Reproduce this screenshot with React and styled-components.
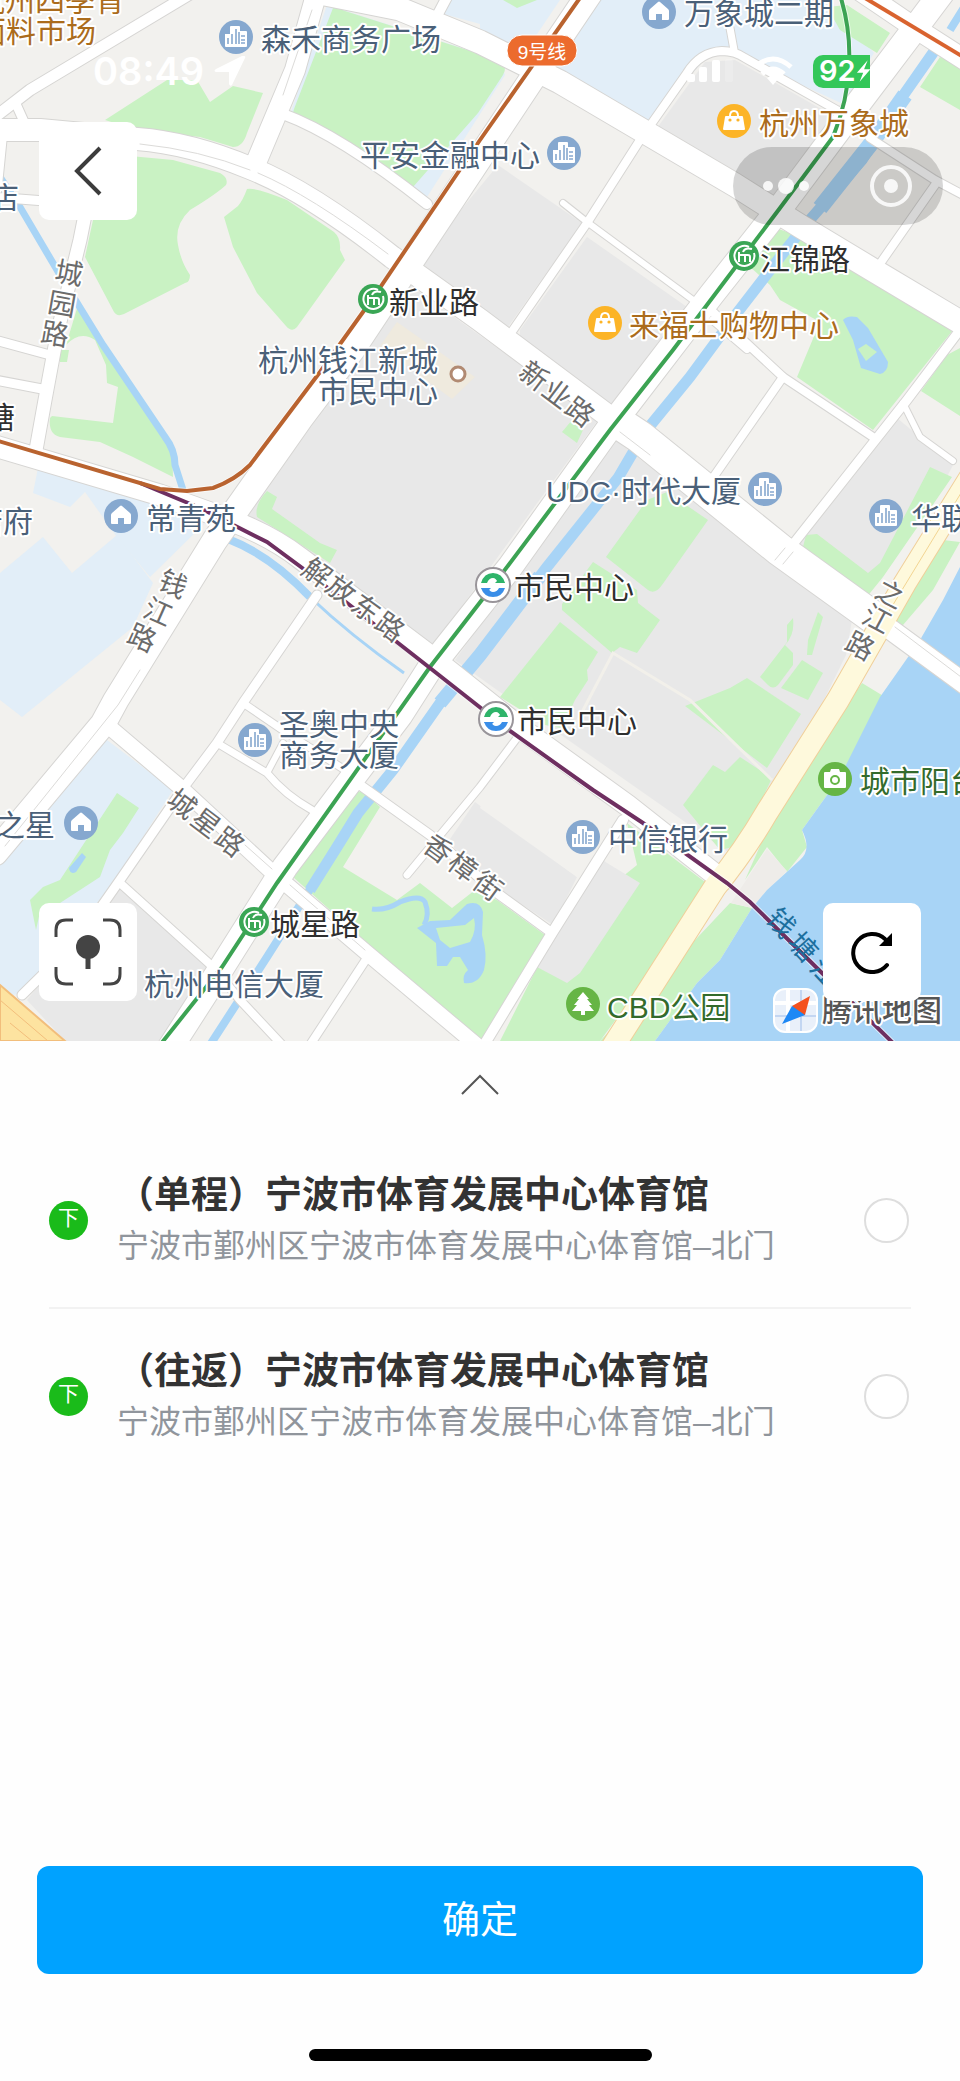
import { useState } from 'react';
import styled, { createGlobalStyle } from 'styled-components';

const sans = `"Liberation Sans", "Noto Sans CJK SC", sans-serif`;

const GlobalStyle = createGlobalStyle`
    * {
        box-sizing: border-box;
    }
    body {
        margin: 0;
        background-color: #fefefe;
        font-family: ${sans};
    }
`;

const Page = styled.div`
    display: flex;
    flex-direction: column;
    min-height: 100vh;
`;

/* map and its controls share one grid cell */
const MapArea = styled.section`
    display: grid;
    overflow: hidden;
    & > * {
        grid-area: 1 / 1;
    }
`;

const MapSvg = styled.svg`
    display: block;
    width: 100%;
    height: auto;
    background-color: #f2f1ee;
    text {
        font-family: ${sans};
    }
`;

const Overlay = styled.div`
    display: flex;
    flex-direction: column;
    padding-bottom: 40px;
`;

const StatusBar = styled.header`
    display: flex;
    align-items: center;
    height: 122px;
    padding: 20px 90px 0 93px;
    color: #fff;
`;

const Time = styled.time`
    font: 600 38px/44px Inter, sans-serif;
    margin-right: 10px;
`;

const StatusIcons = styled.div`
    display: flex;
    align-items: center;
    gap: 20px;
    margin-left: auto;
`;

const Battery = styled.div`
    display: flex;
    align-items: center;
    width: 57px;
    height: 33px;
    padding-left: 6px;
    border-radius: 10px 0 0 10px;
    background-color: #34c759;
    font: 600 29px/32px Inter, sans-serif;
    overflow: hidden;
`;

const NavRow = styled.div`
    display: flex;
    justify-content: space-between;
    padding: 0 17px 0 39px;
`;

const ToolRow = styled.div`
    display: flex;
    justify-content: space-between;
    margin-top: auto;
    padding: 0 39px;
`;

const SquareBtn = styled.button`
    display: flex;
    align-items: center;
    justify-content: center;
    width: 98px;
    height: 98px;
    padding: 0;
    border: none;
    border-radius: 10px;
    background-color: #fff;
    cursor: pointer;
`;

const Capsule = styled.div`
    display: flex;
    width: 210px;
    height: 78px;
    margin-top: 25px;
    border-radius: 39px;
    background-color: rgba(0, 0, 0, 0.16);
`;

const CapsuleBtn = styled.button`
    display: flex;
    flex: 1;
    align-items: center;
    justify-content: center;
    padding: 0;
    border: none;
    background: none;
    cursor: pointer;
`;

const Sheet = styled.main`
    display: flex;
    flex-direction: column;
    flex: 1;
`;

const FoldBtn = styled.button`
    display: flex;
    justify-content: center;
    height: 92px;
    padding: 32px 0 0;
    border: none;
    background: none;
    cursor: pointer;
`;

const StopList = styled.ul`
    list-style: none;
    margin: 0;
    padding: 0 49px;
`;

const StopItem = styled.li`
    border-bottom: 2px solid #f2f2f2;
    &:last-child {
        border-bottom-color: transparent;
    }
`;

const StopLabel = styled.label`
    display: flex;
    align-items: center;
    height: 174px;
    padding-right: 2px;
    cursor: pointer;
`;

const Badge = styled.span`
    flex: none;
    width: 39px;
    height: 39px;
    margin-right: 29px;
    border-radius: 50%;
    background-color: #1abb1a;
    color: #fff;
    font-size: 21px;
    line-height: 34px;
    text-align: center;
`;

const StopText = styled.span`
    display: flex;
    flex-direction: column;
    flex: 1;
`;

const StopName = styled.span`
    color: #333;
    font-size: 37px;
    font-weight: 700;
    line-height: 52px;
`;

const StopAddress = styled.span`
    color: #90959c;
    font-size: 32px;
    line-height: 48px;
`;

const Radio = styled.input`
    appearance: none;
    flex: none;
    width: 45px;
    height: 45px;
    margin: 0;
    border: 2px solid #dedede;
    border-radius: 50%;
    background-color: #fff;
    &:checked {
        border: 12px solid #00a2ff;
    }
`;

const Footer = styled.footer`
    display: flex;
    flex-direction: column;
    align-items: center;
    padding: 0 37px 20px;
`;

const ConfirmBtn = styled.button`
    width: 100%;
    height: 108px;
    margin-bottom: 75px;
    padding: 0 0 8px;
    border: none;
    border-radius: 12px;
    background-color: #00a2ff;
    color: #fff;
    font-family: ${sans};
    font-size: 38px;
    cursor: pointer;
`;

const HomeBar = styled.div`
    width: 343px;
    height: 12px;
    border-radius: 6px;
    background-color: #000;
`;

const GREEN = '#c9f2c3';
const GRAY = '#e8e8e8';
const PALE = '#e2eef8';
const WATER = '#a8d4f6';

const paleAreas = [
    'M0 573L43 537L72 573L117 535L153 583L133 627L43 700L22 717L0 700Z',
    'M38 468L180 510L204 524L150 577L117 537L85 492L70 507L33 493Z',
    'M103 737L173 790L120 873L97 903L33 990L13 995L0 985V863Z',
    'M480 0H560L523 55L480 30ZM594 0H830L874 53L843 104L733 53L707 57L647 123L550 70Z',
    'M450 0H480V24L440 13ZM327 5L500 60L505 75L427 197L291 112Z',
];

const grayAreas = [
    'M498 165L582 223L508 327L418 262Z',
    'M404 281L475 332L598 420L432 647L395 622L247 515Z',
    'M587 237L687 307L688 320L610 408L520 340V330Z',
    'M615 440L852 620L846 655L750 850L735 857L497 690L455 660Z',
    'M657 128L705 62L735 60L837 118L772 200Z',
    'M897 418L953 465L930 510L870 580L795 550Z',
    'M475 802L577 877L553 925L500 890L448 842Z',
    'M118 887L210 970L160 1041H65L27 1000Z',
];

const greenAreas = [
    'M105 120L167 80L197 80L210 102L233 86L263 93L247 133Q243 147 233 147L200 137L137 130Z',
    'M333 8Q340 8 345 11L480 54L500 62Q508 67 503 75L478 113L413 187L380 167L295 118Q292 114 294 109Z',
    'M130 156L173 160L220 173Q229 178 226 185Q215 195 190 210Q174 225 178 245Q181 262 190 275Q190 282 185 283L124 314Q117 317 114 312L85 257L93 220Z',
    'M247 189Q255 187 287 200L334 232Q341 238 340 250L345 260L297 327Q292 333 286 326L257 293L233 247L224 217L238 206Q243 200 247 189Z',
    'M78 305L107 350L172 445L173 477L133 457L100 442L60 437Q48 434 50 418L52 416L113 423L118 387L107 383L106 365L95 340Q80 330 66 345Z',
    'M267 491L277 497L272 509L320 543L337 550L330 563L257 517Q254 505 267 491Z',
    'M647 500L667 492L708 520L662 585Q655 595 648 590L606 557Z',
    'M593 562L637 590L638 603L660 620L637 653L620 647L612 653L562 610V604Z',
    'M560 622L598 652L587 670L588 680L575 700L562 728L545 725L500 697Z',
    'M793 618Q795 635 785 645L793 653V665L778 685Q773 690 768 685L760 677L787 642L787 625Z',
    'M818 612L823 617L812 655L807 655L808 640Z',
    'M802 660L823 673L808 700L781 688Z',
    'M685 706L730 688L747 678L801 714L767 768Z',
    'M713 765L725 772L740 757L772 778L763 797L733 847L720 850L683 805Z',
    'M930 467L952 477L883 577L866 598L803 547L806 535L817 534L868 573L880 563Z',
    'M943 540L960 542L933 590L897 632L885 620Z',
    'M850 700L862 683L885 697L840 777L802 830L807 847L787 872L767 847L745 880L767 830Z',
    'M627 823L713 888L600 1041H500L556 930L637 865Z',
    'M730 903L752 908L720 960L697 983L655 1041H600Z',
    'M350 793L363 791L380 807L343 867L397 900L420 883L452 908L475 890L497 900L545 935L487 1041H477L293 877Z',
    'M117 793L139 808L123 833L110 850L100 877L60 903L40 912L36 930L30 900L43 887L60 880Z',
    'M773 227L790 233L953 330L873 430L797 377L820 322L780 300L770 285L748 265Z',
    'M827 7L847 5L890 33L877 53L840 30ZM940 57L960 66V110L920 87Z',
    'M947 355L960 348V416L921 391ZM572 420L583 430L577 443L562 432Z',
    'M503 0H537L517 8ZM60 350H69L67 362H60Z',
];

// [path, width]; casing is drawn 2px wider below every fill
const roads = [
    ['M200 -12L30 90L-5 117', 11],
    ['M16 104L25 124', 9],
    ['M-5 130L40 130L137 139Q190 143 250 168Q310 192 392 257L480 320L607 415', 22],
    ['M316 -5L295 70L255 165', 20],
    ['M283 114Q340 135 427 204', 10],
    ['M325 -6L400 9L480 42L560 82L735 185L800 226L873 270L965 325', 23],
    ['M447 -3L438 14', 10],
    ['M592 -10L530 82L447 207L352 350L300 419L215 540L116 700L103 724L-5 853', 25],
    ['M862 -8L915 28L965 60', 20],
    ['M955 -25L910 35L857 105L780 208L712 294L610 427L510 567L430 668L400 715L285 867L222 967L170 1048', 25],
    ['M-5 446L160 495L227 519Q270 535 300 558L430 656L523 730L627 805L722 880', 21],
    ['M100 140L80 240L58 330L45 400L36 450', 13],
    ['M2 140L-3 190M-5 197L45 201M-5 340L50 355M-5 380L42 389', 9],
    ['M317 595L245 700L217 743L187 783L120 880L78 940L22 995', 9],
    ['M107 725L180 787L273 873L367 953L480 1048', 15],
    ['M243 703L290 735L345 770', 7],
    ['M217 743L267 773Q285 795 312 810', 7],
    ['M283 743L267 773', 6],
    ['M120 883L213 967L240 1000L285 1048', 8],
    ['M367 958L308 1048', 8],
    ['M360 785L430 835L497 893L552 933', 9],
    ['M407 875L480 787L517 738', 7],
    ['M623 820L552 933L484 1045', 10],
    ['M513 330L587 223L640 140L687 73Q700 52 722 51Q735 51 745 58L842 113', 8],
    ['M730 28L734 50', 7],
    ['M563 203L587 222L693 300', 6],
    ['M870 138L935 180L965 196M937 182L877 268', 8],
    ['M713 312L783 377L873 437M747 349L713 320', 8],
    ['M783 377L710 482', 8],
    ['M975 310L907 400L790 548', 9],
    ['M903 403L920 437L953 461', 6],
];

const wideRoad = 'M607 415L640 437L697 483L780 550L873 617';
const riverRoad = 'M868 613L965 684';
const coastRoad = 'M975 470L905 583L838 700L767 812Q745 850 715 887L612 1048';
const canalWide = 'M935 50L900 100L862 160L808 222L784 252L737 313L690 377L645 432L618 478L547 567L480 655L440 703L393 770L358 813L337 847L310 890';
const canalThin = 'M312 886L267 957L208 1048M975 -10L950 30';
const qiantang = 'M960 567L943 600L920 640L880 697L840 777L802 830Q812 850 800 860L767 890L752 908L720 960L697 983L655 1041H960Z';

const metroLines = [
    ['M840 -5Q851 30 849 65Q848 100 833 137L780 208L673 350L610 430L495 583L430 667L277 883L222 967L160 1045', '#3ca353'],
    ['M140 483L200 508L267 542L305 570L430 668L510 731L593 790L643 823L727 883L750 902L822 973L895 1045', '#6e2f60'],
    ['M-5 440L160 489L187 491L213 488Q235 480 250 465L320 372L373 298L480 140L582 -5', '#b9632f'],
    ['M860 -5L965 58', '#d9632f'],
];

const places = [
    { kind: 'building', cx: 236, cy: 37, x: 261, y: 50, lines: ['森禾商务广场'] },
    { kind: 'building', cx: 564, cy: 153, x: 360, y: 166, lines: ['平安金融中心'] },
    { kind: 'home', cx: 659, cy: 12, x: 684, y: 24, lines: ['万象城二期'] },
    { kind: 'bag', cx: 734, cy: 121, x: 759, y: 134, lines: ['杭州万象城'] },
    { kind: 'bag', cx: 605, cy: 323, x: 629, y: 336, lines: ['来福士购物中心'] },
    { kind: 'dot', cx: 458, cy: 374, x: 438, y: 371, lines: ['杭州钱江新城', '市民中心'], end: true },
    { kind: 'building', cx: 765, cy: 489, x: 546, y: 502, lines: ['UDC·时代大厦'] },
    { kind: 'building', cx: 886, cy: 516, x: 911, y: 529, lines: ['华联'] },
    { kind: 'home', cx: 121, cy: 516, x: 146, y: 529, lines: ['常青苑'] },
    { kind: 'building', cx: 255, cy: 740, x: 279, y: 735, lines: ['圣奥中央', '商务大厦'] },
    { kind: 'home', cx: 81, cy: 823, x: -5, y: 836, lines: ['之星'] },
    { kind: 'building', cx: 583, cy: 837, x: 608, y: 850, lines: ['中信银行'] },
    { kind: 'tree', cx: 583, cy: 1004, x: 607, y: 1018, lines: ['CBD公园'] },
    { kind: 'camera', cx: 835, cy: 779, x: 860, y: 792, lines: ['城市阳台'] },
    { kind: 'none', x: 144, y: 995, lines: ['杭州电信大厦'] },
    { kind: 'none', x: 19, y: 208, lines: ['酒店'], end: true },
    { kind: 'none', x: 33, y: 532, lines: ['唐府'], end: true },
    { kind: 'shop', x: 125, y: 11, lines: ['杭州四季青'], end: true },
    { kind: 'shop', x: 96, y: 42, lines: ['面料市场'], end: true },
];

const placeColor = {
    bag: '#ab6c1c',
    shop: '#ab6c1c',
    tree: '#336b2c',
    camera: '#336b2c',
};

const stations = [
    { name: '新业路', cx: 373, cy: 299, y: 313 },
    { name: '江锦路', cx: 744, cy: 256, y: 270 },
    { name: '城星路', cx: 254, cy: 922, y: 935 },
    { name: '市民中心', cx: 493, cy: 585, y: 598, transfer: true },
    { name: '市民中心', cx: 496, cy: 719, y: 732, transfer: true },
];

// every glyph keeps its own anchor so that the name follows the street
const streets = [
    { rotate: 10, chars: [['城', 69, 273], ['园', 62, 304], ['路', 55, 334]] },
    { rotate: 24, chars: [['钱', 173, 584], ['江', 158, 612], ['路', 142, 638]] },
    { rotate: 28, chars: [['之', 890, 594], ['江', 877, 619], ['路', 860, 646]] },
    { rotate: 36, chars: [['解', 317, 573], ['放', 341, 590], ['东', 366, 609], ['路', 390, 627]] },
    { rotate: 37, chars: [['新', 534, 376], ['业', 557, 394], ['路', 580, 412]] },
    { rotate: 37, chars: [['城', 182, 804], ['星', 206, 823], ['路', 230, 842]] },
    { rotate: 36, chars: [['香', 438, 849], ['樟', 463, 867], ['街', 488, 886]] },
    { rotate: 47, color: '#1c6f9e', halo: 'none', chars: [['钱', 781, 923], ['塘', 803, 947], ['江', 825, 972]] },
];

function PlaceIcon({ kind }) {
    if (kind === 'building') {
        return (
            <g>
                <circle r="17" fill="#86a8cf" />
                <path d="M-11 9V-3H-6V-10Q-6-11-5-11H3Q4-11 4-10V-6H10Q11-6 11-5V9Q11 10 10 10H-10Q-11 10-11 9Z" fill="#fff" />
                <path d="M-8 1V7M-4-3V7M0-8V7M3-5V7M5 -1H9M5 3H9M5 6H9" stroke="#86a8cf" strokeWidth="1.6" />
            </g>
        );
    }
    if (kind === 'home') {
        return (
            <g>
                <circle r="17" fill="#86a8cf" />
                <path d="M-1-10Q0-11 1-10L9-3Q10-2 10-1V7Q10 8 9 8H3V2H-3V8H-9Q-10 8-10 7V-1Q-10-2-9-3Z" fill="#fff" />
            </g>
        );
    }
    if (kind === 'bag') {
        return (
            <g>
                <circle r="17" fill="#fcb427" />
                <path d="M-4-5Q-4-10 0-10Q4-10 4-5" fill="none" stroke="#fff" strokeWidth="2" />
                <path d="M-8-5H8Q9-5 9-4L11 8Q11 9 10 9H-10Q-11 9-11 8L-9-4Q-9-5-8-5Z" fill="#fff" />
                <circle cx="-4" cy="-1" r="1.6" fill="#fcb427" />
                <circle cx="4" cy="-1" r="1.6" fill="#fcb427" />
            </g>
        );
    }
    if (kind === 'tree') {
        return (
            <g>
                <circle r="17" fill="#66b545" />
                <path d="M0-12L6-5H4L9 1H6L11 7H2V11H-2V7H-11L-6 1H-9L-4-5H-6Z" fill="#fff" />
            </g>
        );
    }
    if (kind === 'camera') {
        return (
            <g>
                <circle r="17" fill="#66b545" />
                <path d="M-10-7H-5L-4-10H4L5-7H10Q11-7 11-6V8Q11 9 10 9H-10Q-11 9-11 8V-6Q-11-7-10-7Z" fill="#fff" />
                <circle cy="1" r="4" fill="none" stroke="#66b545" strokeWidth="2" />
            </g>
        );
    }
    if (kind === 'dot') {
        return <circle r="7" fill="#fff" stroke="#b18a72" strokeWidth="3" />;
    }
    return null;
}

function StationIcon({ transfer }) {
    if (transfer) {
        return (
            <g fill="none">
                <circle r="17" fill="#fff" stroke="#99959a" strokeWidth="2" />
                <path d="M-12-2Q-9-12 0-12Q9-12 12-2H5Q3-7 0-7Q-4-7-6-2Z" fill="#2fb46a" />
                <path d="M2-2H12L7-7Z" fill="#2fb46a" />
                <path d="M12 3Q9 12 0 12Q-9 12-12 3H-5Q-3 7 0 7Q4 7 6 3Z" fill="#3a8ee8" />
                <path d="M-2 3H-12L-7 8Z" fill="#3a8ee8" />
            </g>
        );
    }
    return (
        <g fill="none" stroke="#fff">
            <circle r="15" fill="#3aa655" stroke="none" />
            <path d="M5-9A10 10 0 1 0 10-3" strokeWidth="2" />
            <path d="M-5 6V-4M-5-1H4Q6-1 6 1V6M1-1V6" strokeWidth="2" />
            <path d="M-1-4Q1-9 8-7" strokeWidth="2" />
        </g>
    );
}

function CityMap() {
    const label = { fontSize: 30, stroke: '#fff', strokeWidth: 4, strokeLinejoin: 'round', paintOrder: 'stroke' };

    return (
        <MapSvg viewBox="0 0 960 1041" role="img" aria-label="地图">
            {paleAreas.map((d) => <path key={d} d={d} fill={PALE} />)}
            {grayAreas.map((d) => <path key={d} d={d} fill={GRAY} />)}
            <path d="M397 322L475 377L452 399L380 346Z" fill="#efeade" />
            {greenAreas.map((d) => <path key={d} d={d} fill={GREEN} />)}
            <path d="M607 863L640 883L580 973L567 983L537 967L600 858Z" fill={GRAY} />
            <path d="M507 732L617 808L577 877L480 808Z" fill="#f2f1ee" />
            <path d="M767 849L787 871L767 890L752 908L731 903Z" fill="#eeece9" />
            <path d="M570 735L613 653L690 700L772 780" fill="none" stroke="#f2f0ea" strokeWidth="3" />
            <path d={qiantang} fill={WATER} />

            <g fill="none" stroke={WATER}>
                <path d={canalWide} strokeWidth="11" />
                <path d="M905 95L870 145L820 208" strokeWidth="16" />
                <path d="M540 576L480 655L440 703" strokeWidth="14" />
                <path d={canalThin} strokeWidth="8" />
                <path d="M0 177L20 207L60 275L103 345L165 437Q175 450 175 465L183 490" strokeWidth="7" />
                <path d="M228 539Q270 555 310 597" strokeWidth="8" />
                <path d="M310 597Q350 635 404 673" strokeWidth="3" />
                <path d="M372 909Q385 911 400 902Q420 894 425 902Q430 915 424 925" strokeWidth="5" />
            </g>
            <path d="M417 928L430 921L450 920L467 904Q480 900 483 912L482 935Q488 955 484 970Q478 985 464 983Q462 975 468 970L460 957L453 957L447 966L437 966L436 943Z" fill={WATER} />
            <path d="M436 928L465 925L474 918Q477 930 470 942L450 948L440 940Z" fill={GREEN} />
            <path d="M843 320Q847 315 857 317L868 328L888 362Q888 372 880 374L861 368L853 340Z" fill={WATER} />
            <path d="M858 349L866 344L877 352L866 361Z" fill={GREEN} />
            <path d="M82 853L86 857L76 872Q70 875 69 868Z" fill={WATER} />

            <g fill="none" strokeLinecap="round" strokeLinejoin="round">
                {roads.map(([d, w]) => <path key={d} d={d} stroke="#d6d5d3" strokeWidth={w + 2} />)}
                <path d={wideRoad} stroke="#d6d5d3" strokeWidth="34" strokeLinecap="butt" />
                <path d={riverRoad} stroke="#d6d5d3" strokeWidth="22" />
                <path d={coastRoad} stroke="#f0cf9a" strokeWidth="24" />
                {roads.map(([d, w]) => <path key={d} d={d} stroke="#fff" strokeWidth={w} />)}
                <path d={wideRoad} stroke="#fff" strokeWidth="32" strokeLinecap="butt" />
                <path d={riverRoad} stroke="#fff" strokeWidth="20" />
                <path d={coastRoad} stroke="#fef9dc" strokeWidth="22" />
                <path d="M975 470L888 613" stroke="#f3d592" strokeWidth="1" />
                <path d="M895 627L965 680M140 144Q200 150 250 170M258 173Q310 195 388 254M140 670L118 705L5 846M290 885L365 950M245 845L272 869M620 432L650 455M775 560L785 548M783 564L793 552M312 10L283 95" stroke="#dcdbd9" strokeWidth="1" />
            </g>
            <path d="M0 985L65 1041H0Z" fill="#fde3a0" stroke="#f2be7c" strokeWidth="2" />
            <path d="M0 1000L48 1041M10 1023L32 1041" stroke="#f2be7c" strokeWidth="1" />

            <g fill="none">
                {metroLines.map(([d]) => <path key={d} d={d} stroke="#fff" strokeWidth="6" opacity="0.6" />)}
                {metroLines.map(([d, color]) => <path key={d} d={d} stroke={color} strokeWidth="4" />)}
            </g>

            {streets.map((street) =>
                street.chars.map(([char, x, y]) => (
                    <text
                        key={char + x}
                        {...label}
                        fontSize="28"
                        stroke={street.halo || '#fff'}
                        fill={street.color || '#6b6b6b'}
                        textAnchor="middle"
                        transform={`translate(${x} ${y}) rotate(${street.rotate})`}
                        dy="10"
                    >
                        {char}
                    </text>
                ))
            )}

            {places.map((p) => (
                <g key={p.lines[0]}>
                    {p.cx ? (
                        <g transform={`translate(${p.cx} ${p.cy})`}>
                            <PlaceIcon kind={p.kind} />
                        </g>
                    ) : null}
                    {p.lines.map((line, i) => (
                        <text
                            key={line}
                            {...label}
                            x={p.x}
                            y={p.y + i * 31}
                            fill={placeColor[p.kind] || '#4a6078'}
                            textAnchor={p.end ? 'end' : 'start'}
                        >
                            {line}
                        </text>
                    ))}
                </g>
            ))}

            {stations.map((s) => (
                <g key={s.cx}>
                    <g transform={`translate(${s.cx} ${s.cy})`}>
                        <StationIcon transfer={s.transfer} />
                    </g>
                    <text {...label} x={s.cx + (s.transfer ? 21 : 16)} y={s.y} fill="#2f2f2f">
                        {s.name}
                    </text>
                </g>
            ))}
            <text {...label} x="15" y="428" textAnchor="end" fill="#2f2f2f">钱塘</text>

            <rect x="507" y="35" width="70" height="31" rx="15" fill="#ec6b2d" stroke="#fff" strokeWidth="1" />
            <text x="542" y="59" fontSize="19" fill="#fff" textAnchor="middle">9号线</text>

            <rect x="774" y="989" width="43" height="43" rx="11" fill="#e9f0fa" stroke="#fff" strokeWidth="2" />
            <path d="M775 1003H816M788 990V1031" stroke="#fff" strokeWidth="4" />
            <path d="M775 1016H816M801 990V1031" stroke="#c3d6f2" strokeWidth="2" />
            <path d="M810 996L805 1015L798 1016L792 1006Z" fill="#f4511e" />
            <path d="M782 1024L792 1006L805 1015Z" fill="#1e88f5" />
            <text {...label} x="822" y="1021" fill="#555" fontWeight="500">腾讯地图</text>
        </MapSvg>
    );
}

function PhoneStatus() {
    return (
        <StatusBar>
            <Time>08:49</Time>
            <svg width="32" height="32" viewBox="0 0 32 32" fill="#fff">
                <path d="M30 1Q32 1 31 3L18 30Q16 32 15 29V17H2Q-1 16 2 14L28 1Z" />
            </svg>
            <StatusIcons>
                <svg width="46" height="24" viewBox="0 0 46 24" fill="#fff">
                    <rect x="0" y="15" width="8" height="8" rx="2" />
                    <rect x="12" y="8" width="8" height="15" rx="2" />
                    <rect x="25" y="1" width="8" height="22" rx="2" />
                    <rect x="38" y="0" width="8" height="23" rx="2" opacity="0.2" />
                </svg>
                <svg width="40" height="30" viewBox="0 0 40 30" fill="none" stroke="#fff" strokeWidth="5">
                    <path d="M2 11Q20-5 38 11M9 18Q20 8 31 18" />
                    <path d="M14 22Q20 17 26 22L20 29Z" fill="#fff" stroke="none" />
                </svg>
                <Battery>
                    92
                    <svg width="16" height="26" viewBox="0 0 16 26" fill="#fff">
                        <path d="M13 1L1 15H8L4 25L16 11H9Z" />
                    </svg>
                </Battery>
            </StatusIcons>
        </StatusBar>
    );
}

const stops = [
    { id: 'single', name: '（单程）宁波市体育发展中心体育馆', address: '宁波市鄞州区宁波市体育发展中心体育馆–北门' },
    { id: 'round', name: '（往返）宁波市体育发展中心体育馆', address: '宁波市鄞州区宁波市体育发展中心体育馆–北门' },
];

export default function App() {
    const [selected, setSelected] = useState('');

    return (
        <Page>
            <GlobalStyle />
            <MapArea>
                <CityMap />
                <Overlay>
                    <PhoneStatus />
                    <NavRow>
                        <SquareBtn aria-label="返回">
                            <svg width="30" height="50" viewBox="0 0 30 50" fill="none" stroke="#3c3c3c" strokeWidth="4">
                                <path d="M27 2L4 25L27 48" />
                            </svg>
                        </SquareBtn>
                        <Capsule>
                            <CapsuleBtn aria-label="更多">
                                <svg width="48" height="18" viewBox="0 0 48 18" fill="#fff" fillOpacity="0.85">
                                    <circle cx="6" cy="9" r="5" />
                                    <circle cx="24" cy="9" r="8" />
                                    <circle cx="42" cy="9" r="5" />
                                </svg>
                            </CapsuleBtn>
                            <CapsuleBtn aria-label="关闭">
                                <svg width="44" height="44" viewBox="0 0 44 44" fill="none" stroke="#fff" strokeOpacity="0.85">
                                    <circle cx="22" cy="22" r="19" strokeWidth="4" />
                                    <circle cx="22" cy="22" r="7" fill="#fff" fillOpacity="0.85" stroke="none" />
                                </svg>
                            </CapsuleBtn>
                        </Capsule>
                    </NavRow>
                    <ToolRow>
                        <SquareBtn aria-label="定位">
                            <svg width="68" height="68" viewBox="0 0 68 68" fill="none" stroke="#444" strokeWidth="3">
                                <path d="M2 19V12Q2 2 12 2H19M49 2H56Q66 2 66 12V19M66 49V56Q66 66 56 66H49M19 66H12Q2 66 2 56V49" />
                                <circle cx="34" cy="29" r="12" fill="#444" stroke="none" />
                                <path d="M34 36V51" strokeWidth="5" />
                            </svg>
                        </SquareBtn>
                        <SquareBtn aria-label="刷新">
                            <svg width="44" height="44" viewBox="0 0 44 44" fill="none" stroke="#000" strokeWidth="4">
                                <path d="M37 35A19 19 0 1 1 35 9" strokeLinecap="round" />
                                <path d="M42 3V16H29Z" fill="#000" stroke="none" />
                            </svg>
                        </SquareBtn>
                    </ToolRow>
                </Overlay>
            </MapArea>
            <Sheet>
                <FoldBtn aria-label="展开">
                    <svg width="38" height="22" viewBox="0 0 38 22" fill="none" stroke="#555" strokeWidth="2">
                        <path d="M1 21L19 3L37 21" />
                    </svg>
                </FoldBtn>
                <StopList>
                    {stops.map((stop) => (
                        <StopItem key={stop.id}>
                            <StopLabel>
                                <Badge>下</Badge>
                                <StopText>
                                    <StopName>{stop.name}</StopName>
                                    <StopAddress>{stop.address}</StopAddress>
                                </StopText>
                                <Radio
                                    type="radio"
                                    name="stop"
                                    checked={selected === stop.id}
                                    onChange={() => setSelected(stop.id)}
                                />
                            </StopLabel>
                        </StopItem>
                    ))}
                </StopList>
            </Sheet>
            <Footer>
                <ConfirmBtn>确定</ConfirmBtn>
                <HomeBar />
            </Footer>
        </Page>
    );
}
